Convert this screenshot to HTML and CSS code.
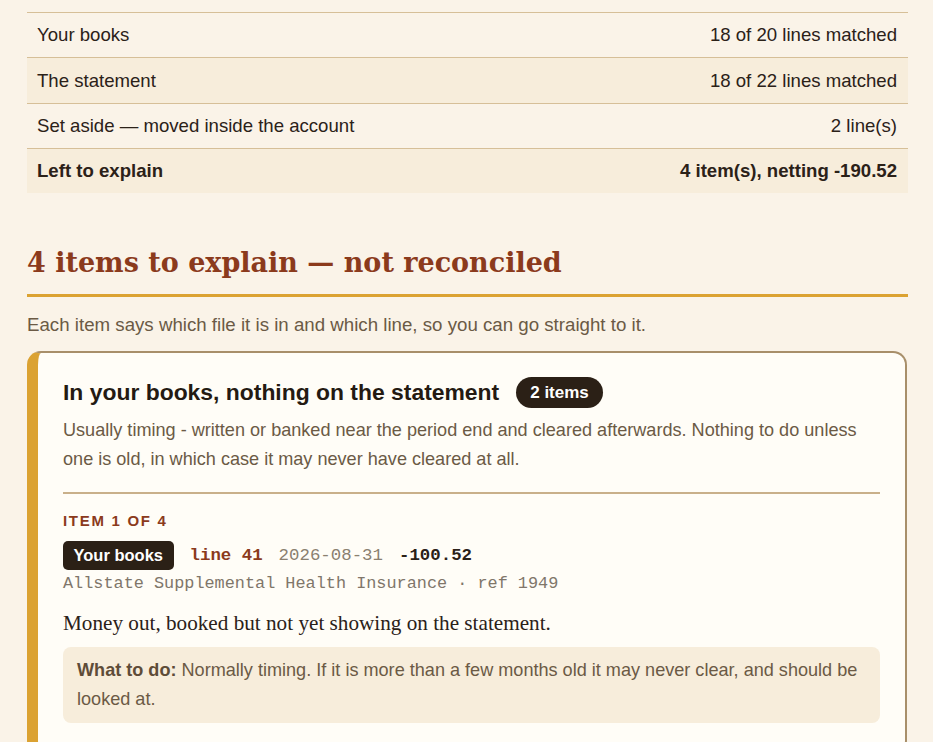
FILE: index.html
```html
<!DOCTYPE html>
<html lang="en">
<head>
<meta charset="utf-8">
<title>Reconciliation</title>
<link rel="stylesheet" href="styles.css">
</head>
<body>
<main class="page">
  <div class="summary">
    <div class="row"><span>Your books</span><span>18 of 20 lines matched</span></div>
    <div class="row alt"><span>The statement</span><span>18 of 22 lines matched</span></div>
    <div class="row"><span>Set aside — moved inside the account</span><span>2 line(s)</span></div>
    <div class="row alt total"><span>Left to explain</span><span>4 item(s), netting -190.52</span></div>
  </div>

  <h2 class="section-title">4 items to explain — not reconciled</h2>
  <p class="lead">Each item says which file it is in and which line, so you can go straight to it.</p>

  <section class="card">
    <div class="card-head">
      <h3 class="card-title">In your books, nothing on the statement</h3>
      <span class="badge">2 items</span>
    </div>
    <p class="card-desc">Usually timing - written or banked near the period end and cleared afterwards. Nothing to do unless one is old, in which case it may never have cleared at all.</p>
    <hr class="divider">
    <div class="item">
      <div class="item-label">Item 1 of 4</div>
      <div class="item-line">
        <span class="tag">Your books</span>
        <span class="mono line-no">line 41</span>
        <span class="mono date">2026-08-31</span>
        <span class="mono amount">-100.52</span>
      </div>
      <div class="mono meta">Allstate Supplemental Health Insurance · ref 1949</div>
      <p class="explain">Money out, booked but not yet showing on the statement.</p>
      <p class="todo"><strong>What to do:</strong> Normally timing. If it is more than a few months old it may never clear, and should be looked at.</p>
    </div>
  </section>
</main>
</body>
</html>
```

FILE: styles.css
```css
* { box-sizing: border-box; }

html, body {
  margin: 0;
  padding: 0;
  background: #faf3e8;
}

body {
  font-family: "Liberation Sans", Arial, sans-serif;
  color: #2b2118;
}

.page {
  width: 881px;
  margin-left: 27px;
  padding-top: 12px;
}

.summary {
  font-size: 18.6px;
  line-height: 26px;
}

.row {
  display: flex;
  justify-content: space-between;
  padding: 9.3px 11px 9px 10px;
  border-top: 1px solid #d6bf98;
}

.row.alt { background: #f7eddb; }
.row.total { font-weight: bold; }

.section-title {
  font-family: "DejaVu Serif", Georgia, serif;
  font-weight: bold;
  font-size: 27px;
  line-height: 36px;
  color: #8b3a1c;
  margin: 52px 0 0;
  padding-bottom: 13px;
  border-bottom: 3px solid #dba232;
}

.lead {
  font-size: 18.7px;
  line-height: 26px;
  color: #6b5a45;
  margin: 15px 0 13px;
}

.card {
  width: 880px;
  background: #fffdf7;
  border: 2px solid #a88f6a;
  border-left: 11px solid #dba232;
  border-radius: 14px;
  padding: 24px 25px 30px 25px;
}

.card-head {
  display: flex;
  align-items: center;
  gap: 17px;
  height: 31px;
}

.card-title {
  margin: 0;
  font-size: 22.9px;
  font-weight: bold;
  color: #241a12;
}

.badge {
  background: #2b2016;
  color: #fff;
  font-weight: bold;
  font-size: 17px;
  line-height: 31px;
  padding: 0 14px;
  border-radius: 16px;
}

.card-desc {
  font-size: 18.1px;
  line-height: 29px;
  color: #6b5a45;
  margin: 8px 0 0;
}

.divider {
  border: 0;
  border-top: 2px solid #c9b08a;
  margin: 18px 0 0;
}

.item-label {
  margin-top: 17px;
  font-size: 15px;
  line-height: 20px;
  font-weight: bold;
  letter-spacing: 1.7px;
  text-transform: uppercase;
  color: #8b3a1c;
}

.item-line {
  display: flex;
  align-items: center;
  gap: 16px;
  margin-top: 10px;
}

.tag {
  background: #2b2016;
  color: #fff;
  font-weight: bold;
  font-size: 16.5px;
  line-height: 29px;
  padding: 0 10.5px;
  border-radius: 5px;
}

.mono {
  font-family: "Liberation Mono", "Courier New", monospace;
  font-size: 17.4px;
}

.line-no { font-weight: bold; color: #8b3a1c; }
.date { color: #8a8070; }
.amount { font-weight: bold; color: #2b2118; }

.meta {
  font-size: 16.85px;
  color: #80766a;
  line-height: 24px;
  margin-top: 2px;
}

.explain {
  font-family: "Liberation Serif", Georgia, serif;
  font-size: 21.2px;
  line-height: 28px;
  color: #2b2118;
  margin: 13px 0 0;
}

.todo {
  margin: 10px 0 0;
  background: #f7eddb;
  border-radius: 8px;
  padding: 9px 14px 9px 14px;
  font-size: 18.1px;
  line-height: 29px;
  color: #6b5a45;
}

.todo strong { color: #5e4c38; }
```
